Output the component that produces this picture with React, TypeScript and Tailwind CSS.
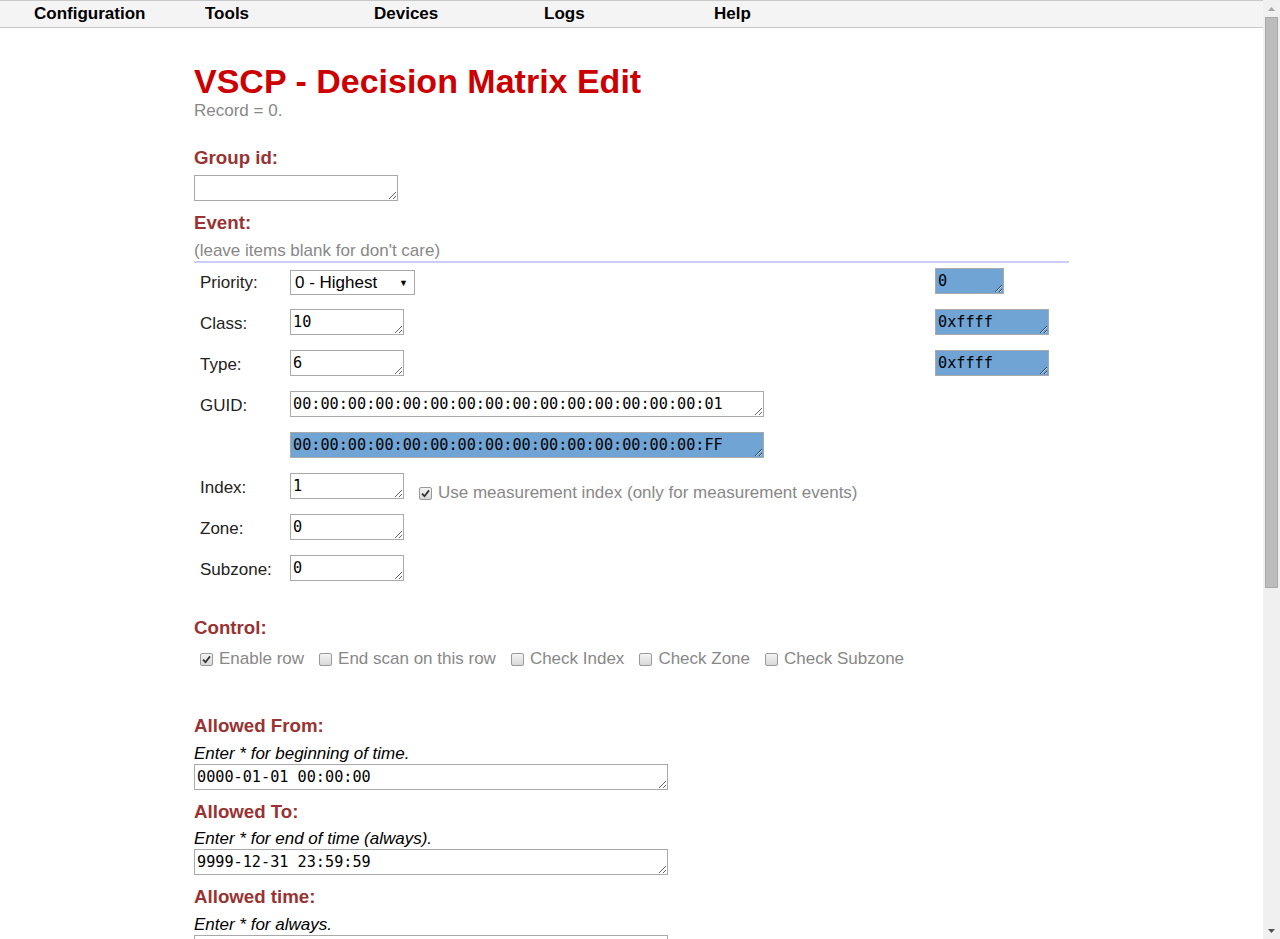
import React from "react";

const mono = "font-['DejaVu_Sans_Mono',monospace]";

function Field({
  value,
  width,
  blue,
}: {
  value: string;
  width: string;
  blue?: boolean;
}) {
  return (
    <textarea
      rows={1}
      defaultValue={value}
      spellCheck={false}
      className={`${width} h-[26px] border border-[#a9a9a9] px-[2px] py-[2px] text-[15.2px] leading-[20px] text-black ${mono} ${
        blue ? "bg-[#70a4d5]" : "bg-white"
      }`}
    />
  );
}

function Check({ checked }: { checked?: boolean }) {
  return (
    <span className="inline-flex h-[13px] w-[13px] shrink-0 items-center justify-center rounded-[2px] border border-[#9a9a9a] bg-gradient-to-b from-[#f4f4f4] to-[#d8d8d8]">
      {checked && (
        <svg width="9" height="9" viewBox="0 0 9 9">
          <path d="M1 4.6 L3.5 7.2 L8 1.4" fill="none" stroke="#333" strokeWidth="1.8" />
        </svg>
      )}
    </span>
  );
}

function Heading({ children, className = "" }: { children: React.ReactNode; className?: string }) {
  return <h3 className={`text-[18.7px] font-bold leading-[22px] text-[#993333] ${className}`}>{children}</h3>;
}

const rows: { label: string; body: React.ReactNode; mask?: React.ReactNode }[] = [
  {
    label: "Priority:",
    body: (
      <div className="mt-[2px] flex h-[25px] w-[125px] items-center justify-between border border-[#a9a9a9] bg-white pl-[4px] pr-[6px] text-[17px] text-black">
        <span>0 - Highest</span>
        <span className="text-[9px]">▼</span>
      </div>
    ),
    mask: <Field value="0" width="w-[69px]" blue />,
  },
  { label: "Class:", body: <Field value="10" width="w-[114px]" />, mask: <Field value="0xffff" width="w-[114px]" blue /> },
  { label: "Type:", body: <Field value="6" width="w-[114px]" />, mask: <Field value="0xffff" width="w-[114px]" blue /> },
  { label: "GUID:", body: <Field value="00:00:00:00:00:00:00:00:00:00:00:00:00:00:00:01" width="w-[474px]" /> },
  { label: "", body: <Field value="00:00:00:00:00:00:00:00:00:00:00:00:00:00:00:FF" width="w-[474px]" blue /> },
  {
    label: "Index:",
    body: (
      <div className="flex items-start">
        <Field value="1" width="w-[114px]" />
        <span className="ml-[15px] mt-[10px] flex items-center gap-[6px] text-[#888888]">
          <Check checked />
          Use measurement index (only for measurement events)
        </span>
      </div>
    ),
  },
  { label: "Zone:", body: <Field value="0" width="w-[114px]" /> },
  { label: "Subzone:", body: <Field value="0" width="w-[114px]" /> },
];

const controls = [
  { label: "Enable row", checked: true },
  { label: "End scan on this row" },
  { label: "Check Index" },
  { label: "Check Zone" },
  { label: "Check Subzone" },
];

export default function App() {
  return (
    <div className="flex h-[939px] w-[1280px] overflow-hidden bg-white font-['Liberation_Sans',Arial,sans-serif] text-[17px] leading-[20px]">
      <div className="h-full flex-1 overflow-hidden">
        {/* Top menu */}
        <nav className="flex h-[28px] items-center border-y border-[#c8c8c8] bg-[#f4f4f4] pl-[34px] text-[17px] font-bold text-black">
          <span className="w-[171px]">Configuration</span>
          <span className="w-[169px]">Tools</span>
          <span className="w-[170px]">Devices</span>
          <span className="w-[170px]">Logs</span>
          <span>Help</span>
        </nav>

        <div className="mx-auto w-[875px]">
          <h1 className="mt-[34px] text-[34px] font-bold leading-[38px] text-[#cc0000]">VSCP - Decision Matrix Edit</h1>
          <p className="mt-[1px] text-[#888888]">Record = 0.</p>

          <Heading className="mt-[26px]">Group id:</Heading>
          <div className="mt-[6px] flex">
            <Field value="" width="w-[204px]" />
          </div>

          <Heading className="mt-[11px]">Event:</Heading>
          <p className="mt-[7px] text-[#888888]">(leave items blank for don't care)</p>
          <div className="h-[2px] bg-[#ccccff]" />

          {/* Event fields */}
          <div>
            {rows.map((r, i) => (
              <div key={i} className="grid h-[41px] grid-cols-[96px_645px_1fr] items-start pt-[5px]">
                <span className="mt-[5px] pl-[6px] text-[#222222]">{r.label}</span>
                <div className="flex">{r.body}</div>
                <div className="flex">{r.mask}</div>
              </div>
            ))}
          </div>

          <Heading className="mt-[26px]">Control:</Heading>
          <div className="mt-[10px] flex items-center pl-[6px] text-[#888888]">
            {controls.map((c) => (
              <span key={c.label} className="mr-[15px] flex items-center gap-[6px]">
                <Check checked={c.checked} />
                {c.label}
              </span>
            ))}
          </div>

          <Heading className="mt-[46px]">Allowed From:</Heading>
          <p className="mt-[7px] italic text-black">Enter * for beginning of time.</p>
          <div className="flex">
            <Field value="0000-01-01 00:00:00" width="w-[474px]" />
          </div>

          <Heading className="mt-[11px]">Allowed To:</Heading>
          <p className="mt-[6px] italic text-black">Enter * for end of time (always).</p>
          <div className="flex">
            <Field value="9999-12-31 23:59:59" width="w-[474px]" />
          </div>

          <Heading className="mt-[11px]">Allowed time:</Heading>
          <p className="mt-[7px] italic text-black">Enter * for always.</p>
          <div className="flex">
            <Field value="" width="w-[474px]" />
          </div>
        </div>
      </div>

      {/* Window scrollbar */}
      <div className="flex h-full w-[17px] flex-col items-center bg-[#f0f0f0]">
        <div className="flex h-[17px] items-center justify-center">
          <svg width="7" height="4" viewBox="0 0 7 4">
            <path d="M0 4 L3.5 0 L7 4 Z" fill="#a3a3a3" />
          </svg>
        </div>
        <div className="h-[571px] w-[13px] border border-[#a8a8a8] bg-[#bcbcbc]" />
        <div className="flex-1" />
        <div className="flex h-[17px] items-center justify-center">
          <svg width="7" height="4" viewBox="0 0 7 4">
            <path d="M0 0 L7 0 L3.5 4 Z" fill="#505050" />
          </svg>
        </div>
      </div>
    </div>
  );
}
